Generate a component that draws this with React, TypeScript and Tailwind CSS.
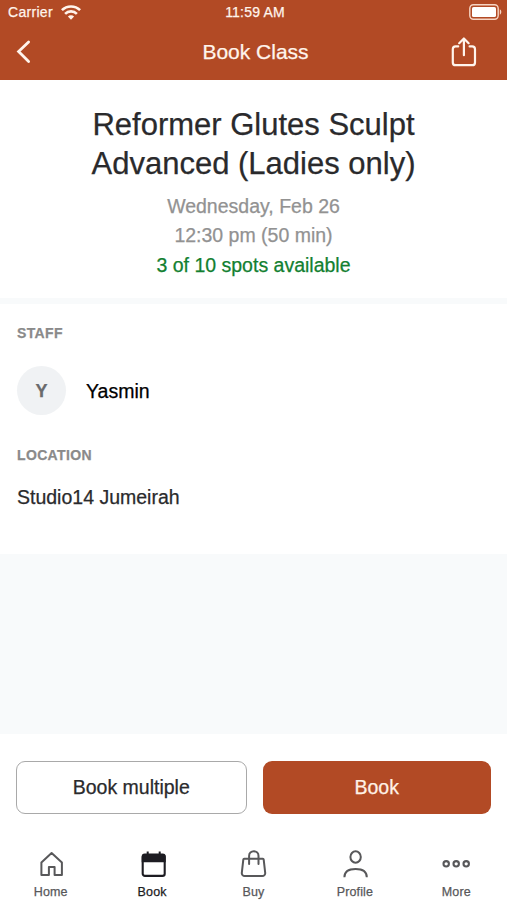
import React, { useState } from "react";
import clsx from "clsx";

const HomeIcon = () => (
  <svg className="w-7 h-7" viewBox="0 0 28 28" fill="none" stroke="currentColor" strokeWidth="2" strokeLinejoin="round">
    <path d="M4.4 12.4 14.6 3l10.3 9.4V25h-7.3v-8h-5.7v8H4.4z" />
  </svg>
);

const CalendarIcon = () => (
  <svg className="w-7 h-7" viewBox="0 0 28 28" fill="none">
    <path d="M3.7 6.4a3 3 0 0 1 3-3h18a3 3 0 0 1 3 3v5.8h-24z" fill="currentColor" />
    <path d="M9.7 1.5v4M21.7 1.5v4" stroke="currentColor" strokeWidth="2" />
    <rect x="4.7" y="5" width="22" height="20.9" rx="2.2" stroke="currentColor" strokeWidth="2.1" />
  </svg>
);

const BagIcon = () => (
  <svg className="w-7 h-7" viewBox="0 0 28 28" fill="none" stroke="currentColor" strokeWidth="2" strokeLinecap="round" strokeLinejoin="round">
    <path d="M5.2 8.8h18.6a.9.9 0 0 1 .9.8l1.5 13.2a2.9 2.9 0 0 1-2.9 3.2H5.7a2.9 2.9 0 0 1-2.9-3.2L4.3 9.6a.9.9 0 0 1 .9-.8z" />
    <path d="M10.1 14V5.9a4.7 4.7 0 0 1 9.4 0V14" />
  </svg>
);

const ProfileIcon = () => (
  <svg className="w-7 h-7" viewBox="0 0 28 28" fill="none" stroke="currentColor" strokeWidth="2">
    <ellipse cx="14.6" cy="7" rx="5.2" ry="5.7" />
    <path d="M3.4 27.3c0-5.6 4-8.3 11.2-8.3s11.2 2.7 11.2 8.3" />
  </svg>
);

const MoreIcon = () => (
  <svg className="w-7 h-7" viewBox="0 0 28 28" fill="none" stroke="currentColor" strokeWidth="2.1">
    <circle cx="4.2" cy="13.8" r="2.7" />
    <circle cx="14.2" cy="13.8" r="2.7" />
    <circle cx="24.2" cy="13.8" r="2.7" />
  </svg>
);

const tabs = [
  { name: "Home", icon: HomeIcon },
  { name: "Book", icon: CalendarIcon },
  { name: "Buy", icon: BagIcon },
  { name: "Profile", icon: ProfileIcon },
  { name: "More", icon: MoreIcon },
];

const StatusBar = () => (
  <div className="grid grid-cols-3 items-center h-6 pl-2 pr-[5px] text-sm">
    <div className="flex items-center gap-2">
      <span className="tracking-[0.3px]">Carrier</span>
      <svg className="w-5 h-[15px]" viewBox="0 0 20 15" fill="none" stroke="currentColor" strokeWidth="2.6">
        <path d="M.9 5.2a12.9 12.9 0 0 1 18.2 0M4.1 8.8a8.3 8.3 0 0 1 11.8 0" />
        <path d="M6.9 11.6a4.4 4.4 0 0 1 6.2 0L10 14.8z" fill="currentColor" stroke="none" />
      </svg>
    </div>
    <span className="text-center tracking-[0.2px]">11:59 AM</span>
    <svg className="justify-self-end w-[33px] h-4" viewBox="0 0 33 16" fill="none">
      <rect x="0.8" y="0.8" width="28.4" height="14.4" rx="3.6" stroke="#f6d4c3" strokeWidth="1.4" />
      <rect x="3" y="3" width="24" height="10" rx="1.6" fill="white" />
      <path d="M30.8 5.3c2 .8 2 4.6 0 5.4z" fill="#f6d4c3" />
    </svg>
  </div>
);

const Header = () => (
  <header className="h-20 bg-[#b24a25] text-[#fff4ec]">
    <StatusBar />
    <div className="grid grid-cols-[64px_1fr_60px] items-center h-14">
      <button type="button" aria-label="Back" className="pl-4">
        <svg className="w-4 h-6" viewBox="0 0 16 24" fill="none" stroke="currentColor" strokeWidth="2.8" strokeLinecap="round">
          <path d="M12.6 2 2.6 11.6l10 9.8" />
        </svg>
      </button>
      <h1 className="text-center text-[21px]">Book Class</h1>
      <button type="button" aria-label="Share" className="pl-1">
        <svg className="w-[26px] h-[30px]" viewBox="0 0 26 30" fill="none" stroke="currentColor" strokeWidth="2.2" strokeLinecap="round" strokeLinejoin="round">
          <path d="M7.2 9.4H4.6a2.8 2.8 0 0 0-2.8 2.8v13.2a2.8 2.8 0 0 0 2.8 2.8h16.6a2.8 2.8 0 0 0 2.8-2.8V12.2a2.8 2.8 0 0 0-2.8-2.8h-2.6" />
          <path d="M12.9 18.2V1.6M8.2 6.2l4.7-4.7 4.7 4.7" />
        </svg>
      </button>
    </div>
  </header>
);

const App = () => {
  const [activeTab, setActiveTab] = useState("Book");

  return (
    <div className="flex flex-col h-[900px] w-full bg-[#f8fafb] font-['Liberation_Sans',Arial,sans-serif] text-[#2a2a2c] [-webkit-text-stroke:0.25px]">
      <Header />

      {/* class summary */}
      <section className="h-[218px] pt-[25px] bg-white text-center">
        <h2 className="text-[31px] leading-[39px]">
          Reformer Glutes Sculpt
          <br />
          Advanced (Ladies only)
        </h2>
        <div className="mt-[9px] text-[19.5px] leading-[29.3px] text-[#929292]">
          <p>Wednesday, Feb 26</p>
          <p>12:30 pm (50 min)</p>
          <p className="text-[#128030]">3 of 10 spots available</p>
        </div>
      </section>

      {/* staff and location */}
      <section className="mt-1.5 h-[250px] px-[17px] pt-[19px] bg-white">
        <h3 className="text-sm leading-5 font-bold tracking-[0.35px] text-[#8a8a8a]">STAFF</h3>
        <div className="flex items-center gap-5 mt-[23px]">
          <div className="flex items-center justify-center size-[49px] rounded-full bg-[#f0f2f4] text-lg font-bold text-[#6a6a6c]">
            Y
          </div>
          <span className="pt-0.5 text-[19.5px] text-black">Yasmin</span>
        </div>
        <h3 className="mt-[30px] text-sm leading-5 font-bold tracking-[0.35px] text-[#8a8a8a]">LOCATION</h3>
        <p className="mt-[18px] text-[19.5px] leading-7">Studio14 Jumeirah</p>
      </section>

      {/* booking actions */}
      <footer className="mt-auto h-[166px] bg-white">
        <div className="flex gap-4 px-4 pt-[26.5px] text-[19.5px]">
          <button type="button" className="flex-1 h-[53px] pt-px rounded-[9px] border border-[#a9a9a9]">
            Book multiple
          </button>
          <button type="button" className="flex-1 h-[53px] pt-px rounded-[9px] bg-[#b24a25] text-[#fff1e6]">
            Book
          </button>
        </div>

        <nav className="grid grid-cols-5 mt-[36.5px]">
          {tabs.map(({ name, icon: Icon }) => (
            <button
              type="button"
              key={name}
              onClick={() => setActiveTab(name)}
              className={clsx(
                "flex flex-col items-center gap-[5px] text-[12.5px] leading-[18px] tracking-[0.15px]",
                activeTab === name ? "text-[#1d1c22]" : "text-[#58585a]"
              )}
            >
              <Icon />
              {name}
            </button>
          ))}
        </nav>
      </footer>
    </div>
  );
};

export default App;
